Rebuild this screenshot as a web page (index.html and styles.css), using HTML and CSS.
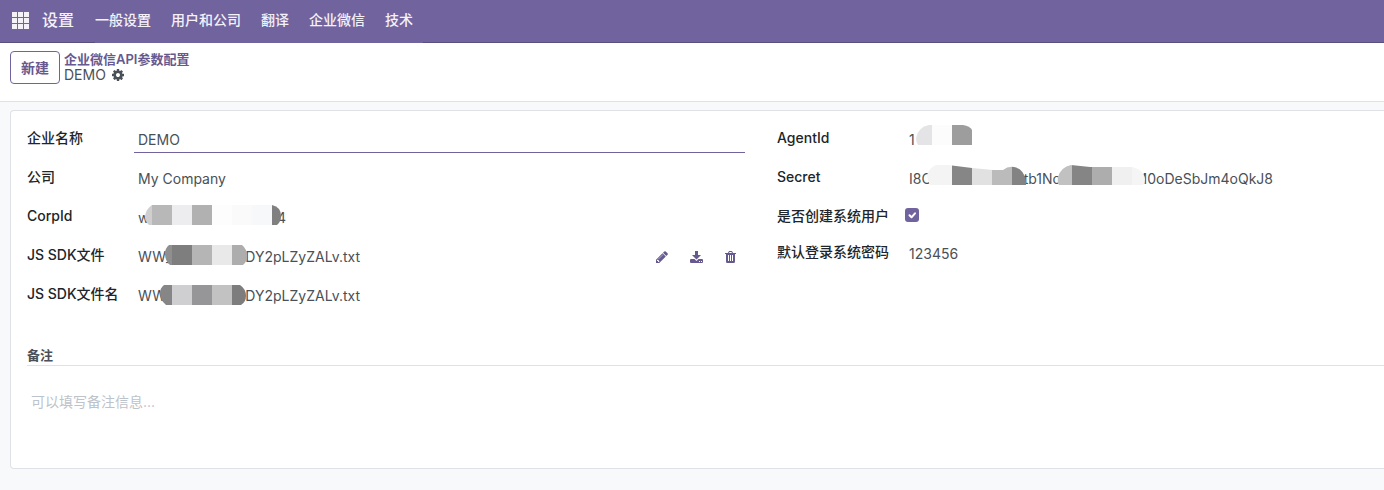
FILE: index.html
```html
<!DOCTYPE html>
<html lang="zh-CN">
<head>
<meta charset="utf-8">
<meta name="viewport" content="width=device-width, initial-scale=1">
<title>企业微信API参数配置</title>
<link rel="stylesheet" href="styles.css">
</head>
<body>
<header class="navbar">
  <button class="apps" type="button" aria-label="应用">
    <svg width="17" height="17" viewBox="0 0 17 17" fill="currentColor"><path d="M0 0h5v5H0zM6 0h5v5H6zM12 0h5v5h-5zM0 6h5v5H0zM6 6h5v5H6zM12 6h5v5h-5zM0 12h5v5H0zM6 12h5v5H6zM12 12h5v5h-5z"/></svg>
  </button>
  <a class="brand" href="#">设置</a>
  <nav class="menu">
    <a href="#">一般设置</a>
    <a href="#">用户和公司</a>
    <a href="#">翻译</a>
    <a href="#">企业微信</a>
    <a href="#">技术</a>
  </nav>
</header>
<section class="control-panel">
  <button class="new-button" type="button">新建</button>
  <div class="breadcrumb">
    <a class="crumb" href="#">企业微信API参数配置</a>
    <div class="current">
      <span>DEMO</span>
      <button class="icon-button gear" type="button" aria-label="动作">
        <svg width="12" height="12" viewBox="0 0 1536 1536" fill="currentColor"><path d="M1024 768q0-106-75-181t-181-75-181 75-75 181 75 181 181 75 181-75 75-181zm512-109v222q0 12-8 23t-20 13l-185 28q-19 54-39 91 35 50 107 138 10 12 10 25t-9 23q-27 37-99 108t-94 71q-12 0-26-9l-138-108q-44 23-91 38-16 136-29 186-7 28-36 28H657q-14 0-24.500-8.500T621 1506l-28-184q-49-16-90-37l-141 107q-10 9-25 9-14 0-25-11-126-114-165-168-7-10-7-23 0-12 8-23 15-21 51-66.500t54-70.500q-27-50-41-99L29 913q-13-2-21-12.500T0 877V655q0-12 8-23t19-13l186-28q14-46 39-92-40-57-107-138-10-12-10-24 0-10 9-23 26-36 98.500-107.500T337 135q13 0 26 10l138 107q44-23 91-38 16-136 29-186 7-28 36-28h222q14 0 24.500 8.500T915 30l28 184q49 16 90 37l142-107q9-9 24-9 13 0 25 10 129 119 165 170 7 8 7 22 0 12-8 23-15 21-51 66.500t-54 70.500q26 50 41 98l183 28q13 2 21 12.500t8 23.500z"/></svg>
      </button>
    </div>
  </div>
</section>
<main class="content">
  <form class="sheet">
    <div class="groups">
      <div class="group">
        <div class="row">
          <label for="name">企业名称</label>
          <input class="field active" id="name" type="text" value="DEMO">
        </div>
        <div class="row">
          <label for="company">公司</label>
          <input class="field" id="company" type="text" value="My Company">
        </div>
        <div class="row">
          <span class="label">CorpId</span>
          <div class="field masked">
            <span class="value corp"><span>w</span><span>4</span></span>
            <svg class="mask mask-corp" width="136" height="20" viewBox="145 0 136 20">
              <clipPath id="c1"><path d="M152 0H272Q281 2 281 11Q281 17 277 20H149Q145 17 145 11Q146 4 152 0z"/></clipPath>
              <g clip-path="url(#c1)"><path fill="#cfcfcf" d="M145 0h7v20h-7z"/><path fill="#b8b8b9" d="M152 0h20v20h-20z"/><path fill="#ededef" d="M172 0h20v20h-20z"/><path fill="#b1b1b2" d="M192 0h20v20h-20z"/><path fill="#fdfdfe" d="M212 0h20v20h-20z"/><path fill="#fafafb" d="M232 0h20v20h-20z"/><path fill="#f7f8fa" d="M252 0h20v20h-20z"/><path fill="#808080" d="M272 0h9v20h-9z"/></g>
            </svg>
          </div>
        </div>
        <div class="row">
          <span class="label">JS SDK文件</span>
          <div class="field masked">
            <span class="value file"><span>WW_</span><span>pDY2pLZyZALv.txt</span></span>
            <svg class="mask mask-file" width="82" height="20" viewBox="165 0 82 20">
              <clipPath id="c2"><path d="M169 0H242Q247 4 247 11Q247 17 243 20H170Q165 16 165 9Q165 3 169 0z"/></clipPath>
              <g clip-path="url(#c2)"><path fill="#8f8f8f" d="M165 0h7v20h-7z"/><path fill="#7e7e7e" d="M172 0h20v20h-20z"/><path fill="#b5b5b6" d="M192 0h20v20h-20z"/><path fill="#e9e9e9" d="M212 0h20v20h-20z"/><path fill="#adadad" d="M232 0h15v20h-15z"/></g>
            </svg>
            <span class="actions">
              <button class="icon-button" type="button" aria-label="编辑"><svg width="12" height="12" viewBox="0 0 1536 1536" fill="currentColor"><path d="M363 1408l91-91-235-235-91 91v107h128v128h107zM886 480q0-22-22-22-10 0-17 7L305 1007q-7 7-7 17 0 22 22 22 10 0 17-7L879 497q7-7 7-17zM832 288l416 416-832 832H0v-416zM1515 384q0 53-37 90l-166 166L896 224l166-165q36-38 90-38 53 0 91 38l235 234q37 39 37 91z"/></svg></button>
              <button class="icon-button" type="button" aria-label="下载"><svg width="13" height="13" viewBox="0 0 13 13" fill="currentColor"><path fill-rule="evenodd" d="M5 0h3v4h3L6.500 8.500 2 4h3zM1 8h3.500l2 2 2-2H12q1 0 1 1v2q0 1-1 1H1q-1 0-1-1V9q0-1 1-1zM9 10v1h1v-1zM11 10v1h1v-1z"/></svg></button>
              <button class="icon-button" type="button" aria-label="删除"><svg width="11" height="12" viewBox="0 0 11 12" fill="currentColor"><path fill-rule="evenodd" d="M3 2L3.700.4Q4 0 4.400 0h2.200Q7 0 7.300.4L8 2h3v1h-1v7.500Q10 12 8.700 12H2.300Q1 12 1 10.500V3H0V2zM4.100 2h2.800L6.500 1h-2zM3 4v6h1V4zM5 4v6h1V4zM7 4v6h1V4z"/></svg></button>
            </span>
          </div>
        </div>
        <div class="row">
          <span class="label">JS SDK文件名</span>
          <div class="field masked">
            <span class="value file"><span>WW</span><span>pDY2pLZyZALv.txt</span></span>
            <svg class="mask mask-filename" width="86" height="20" viewBox="160 0 86 20">
              <clipPath id="c3"><path d="M164 0H240Q246 4 246 11Q246 17 241 20H166Q160 15 160 8Q160 3 164 0z"/></clipPath>
              <g clip-path="url(#c3)"><path fill="#868686" d="M160 0h12v20h-12z"/><path fill="#cfcfd1" d="M172 0h20v20h-20z"/><path fill="#969698" d="M192 0h20v20h-20z"/><path fill="#c2c2c2" d="M212 0h20v20h-20z"/><path fill="#7d7d7d" d="M232 0h14v20h-14z"/></g>
            </svg>
          </div>
        </div>
      </div>
      <div class="group right">
        <div class="row">
          <span class="label">AgentId</span>
          <div class="field masked">
            <span class="value"><span>1</span></span>
            <svg class="mask mask-agent" width="56" height="20" viewBox="916 0 56 20">
              <clipPath id="c4"><path d="M929 0H963Q970 1 972 5V20H918Q916 17 916 13Q918 2 929 0z"/></clipPath>
              <g clip-path="url(#c4)"><path fill="#e4e4e6" d="M916 0h16v20h-16z"/><path fill="#fcfcfd" d="M932 0h20v20h-20z"/><path fill="#9d9d9d" d="M952 0h20v20h-20z"/></g>
            </svg>
          </div>
        </div>
        <div class="row">
          <span class="label">Secret</span>
          <div class="field masked">
            <span class="value secret"><span>I8C</span><span class="middle">tb1Nc</span><span>M0oDeSbJm4oQkJ8</span></span>
            <svg class="mask mask-secret-a" width="99" height="20" viewBox="927 0 99 20">
              <clipPath id="c5"><path d="M936 0H948L972 3L993 5H1003Q1008 1 1014 2Q1024 4 1026 16V20H930Q927 15 927 10Q929 3 936 0z"/></clipPath>
              <g clip-path="url(#c5)"><path fill="#f4f4f4" d="M927 0h25v20h-25z"/><path fill="#868686" d="M952 0h20v20h-20z"/><path fill="#e1e1e1" d="M972 0h20v20h-20z"/><path fill="#bbb" d="M992 0h20v20h-20z"/><path fill="#838383" d="M1012 0h14v20h-14z"/></g>
            </svg>
            <svg class="mask mask-secret-b" width="88" height="20" viewBox="1057 0 88 20">
              <clipPath id="c6"><path d="M1071 0L1090 2H1132Q1143 4 1145 14Q1145 18 1143 20H1059Q1057 17 1058 12Q1061 2 1071 0z"/></clipPath>
              <g clip-path="url(#c6)"><path fill="#c1c1c1" d="M1057 0h15v20h-15z"/><path fill="#858585" d="M1072 0h20v20h-20z"/><path fill="#adadad" d="M1092 0h20v20h-20z"/><path fill="#f0f0f0" d="M1112 0h20v20h-20z"/><path fill="#f5f5f5" d="M1132 0h13v20h-13z"/></g>
            </svg>
          </div>
        </div>
        <div class="row check-row">
          <label for="create-user">是否创建系统用户</label>
          <span class="check">
            <input id="create-user" type="checkbox" checked>
            <svg class="tick" width="14" height="14" viewBox="0 0 14 14" fill="none" stroke="#fff" stroke-width="2" stroke-linecap="round" stroke-linejoin="round"><path d="M4.500 7.300l2 2 3.500-4"/></svg>
          </span>
        </div>
        <div class="row">
          <label for="password">默认登录系统密码</label>
          <input class="field" id="password" type="text" value="123456">
        </div>
      </div>
    </div>
    <h2 class="section-title"><label for="notes">备注</label></h2>
    <textarea class="notes" id="notes" placeholder="可以填写备注信息..."></textarea>
  </form>
</main>
</body>
</html>
```

FILE: styles.css
```css
* {
  box-sizing: border-box;
}

body {
  margin: 0;
  min-height: 100vh;
  background: #f8f9fa;
  color: #495057;
  font: 14px/20px Inter, "Noto Sans CJK SC", sans-serif;
  overflow-x: hidden;
}

a {
  text-decoration: none;
}

button,
input,
textarea {
  font: inherit;
  color: inherit;
}

svg {
  display: block;
}

.navbar {
  display: flex;
  height: 43px;
  background: #71639e;
  border-bottom: 1px solid #5a4f7f;
  color: #f4f2f8;
}

.navbar a {
  color: inherit;
}

.apps {
  display: flex;
  align-items: center;
  padding: 0 13px 2px 12px;
  border: 0;
  background: none;
}

.brand {
  padding: 10px 10px 0 0;
  font-size: 16px;
  font-weight: 500;
}

.menu {
  display: flex;
  height: 43px;
  margin-left: 11px;
  padding-right: 10px;
  gap: 20px;
  background: #71639e;
  line-height: 40px;
  font-weight: 500;
}

.control-panel {
  display: flex;
  align-items: flex-start;
  gap: 4px;
  height: 59px;
  padding: 8px 10px;
  background: #fff;
  border-bottom: 1px solid #dee2e6;
}

.new-button {
  height: 33px;
  padding: 0 10px;
  border: 1px solid #71639e;
  border-radius: 4px;
  background: #fff;
  color: #66598f;
  font-weight: 600;
}

.breadcrumb {
  line-height: 16px;
}

.crumb {
  display: block;
  color: #66598f;
  font-size: 13px;
  font-weight: 600;
}

.current {
  display: flex;
  align-items: center;
  gap: 6px;
}

.icon-button {
  padding: 0;
  border: 0;
  background: none;
  color: #66598f;
}

.gear {
  color: #495057;
}

.content {
  padding: 8px 0 21px 10px;
}

.sheet {
  min-height: 359px;
  padding: 16px 0 0 16px;
  border: 1px solid #dee2e6;
  border-right: 0;
  border-radius: 4px 0 0 4px;
  background: #fff;
}

.groups {
  display: grid;
  grid-template-columns: minmax(0, 718fr) minmax(0, 607fr);
  gap: 32px;
}

.row {
  display: grid;
  grid-template-columns: 107px 1fr;
  align-items: start;
  height: 39px;
}

.right .row {
  grid-template-columns: 128px 1fr;
}

.right .check-row {
  height: 36px;
}

.row label,
.label {
  padding-top: 1px;
  color: #212529;
  font-weight: 500;
}

.field {
  width: 100%;
  height: 26px;
  padding: 2px 4px 3px;
  border: 0;
  border-bottom: 1px solid transparent;
  background: none;
  outline: none;
}

.active {
  border-bottom-color: #71639e;
}

.masked {
  position: relative;
  display: flex;
  padding-top: 3px;
  padding-bottom: 2px;
}

.value {
  display: flex;
  justify-content: space-between;
}

.corp {
  width: 148px;
}

.file {
  width: 222px;
}

.secret {
  width: 364px;
}

.middle {
  margin-left: 18px;
}

.mask {
  position: absolute;
  top: 0;
}

.mask-corp {
  left: 11px;
}

.mask-file {
  top: 1px;
  left: 31px;
}

.mask-filename {
  top: 2px;
  left: 26px;
}

.mask-agent {
  top: -2px;
  left: 11px;
}

.mask-secret-a {
  top: -1px;
  left: 22px;
}

.mask-secret-b {
  top: -1px;
  left: 152px;
}

.actions {
  display: flex;
  align-items: center;
  gap: 22px;
  margin-left: auto;
  padding-right: 5px;
}

.check {
  position: relative;
  width: 14px;
  margin-top: 3px;
}

.check input {
  display: block;
  width: 14px;
  height: 14px;
  margin: 0;
  appearance: none;
  border-radius: 3px;
  background: #71639e;
}

.tick {
  position: absolute;
  top: 0;
  left: 0;
  pointer-events: none;
}

.section-title {
  margin: 23px 0 0;
  border-bottom: 1px solid #dee2e6;
  font-size: 13px;
  line-height: 20px;
  font-weight: 700;
}

.notes {
  display: block;
  width: 100%;
  height: 70px;
  margin-top: 23px;
  padding: 3px 4px;
  border: 0;
  background: none;
  outline: none;
  resize: none;
}

.notes::placeholder {
  color: #bcc3ca;
  opacity: 1;
}
```
